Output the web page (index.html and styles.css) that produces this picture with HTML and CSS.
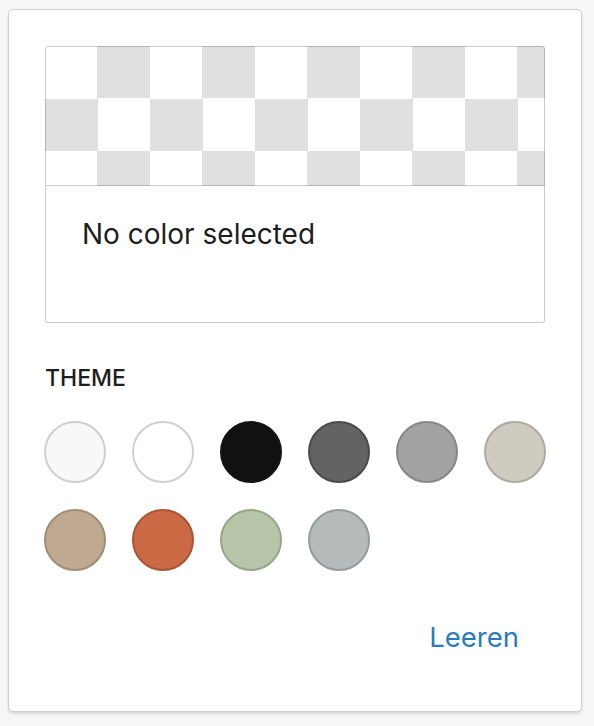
FILE: index.html
```html
<!DOCTYPE html>
<html lang="de">
<head>
<meta charset="utf-8">
<title>Color picker</title>
<link rel="stylesheet" href="styles.css">
</head>
<body>
<div class="card">
  <div class="preview">
    <div class="checker"></div>
    <div class="preview-label">No color selected</div>
  </div>
  <div class="section-title">THEME</div>
  <div class="swatches">
    <button class="swatch s1" aria-label="Off white"></button>
    <button class="swatch s2" aria-label="White"></button>
    <button class="swatch s3" aria-label="Black"></button>
    <button class="swatch s4" aria-label="Dark gray"></button>
    <button class="swatch s5" aria-label="Gray"></button>
    <button class="swatch s6" aria-label="Stone"></button>
    <button class="swatch s7" aria-label="Sand"></button>
    <button class="swatch s8" aria-label="Terracotta"></button>
    <button class="swatch s9" aria-label="Sage"></button>
    <button class="swatch s10" aria-label="Slate"></button>
  </div>
  <div class="actions">
    <button class="link-btn">Leeren</button>
  </div>
</div>
</body>
</html>
```
FILE: styles.css
```css
* { box-sizing: border-box; }
html, body { margin: 0; padding: 0; }
body {
  background: #f7f7f7;
  font-family: Inter, "Noto Sans", sans-serif;
  color: #1e1e1e;
  padding: 9px 12px 14px 8px;
}
.card {
  width: 574px;
  height: 703px;
  background: #fff;
  border: 1px solid #cfcfcf;
  border-radius: 5px;
  box-shadow: 0 2px 3px rgba(0,0,0,0.12);
  padding: 36px 36px 0 36px;
  display: flex;
  flex-direction: column;
}
.preview {
  width: 500px;
  display: flex;
  flex-direction: column;
}
.checker {
  height: 140px;
  border-radius: 3px 3px 0 0;
  background-color: #fff;
  background-image: conic-gradient(#e0e0e0 0 25%, #fff 0 50%, #e0e0e0 0 75%, #fff 0);
  background-size: 105px 105px;
  background-position: 0 0;
  box-shadow: inset 0 0 0 1px rgba(0,0,0,0.2);
}
.preview-label {
  height: 137px;
  border: 1px solid rgba(0,0,0,0.2);
  border-top: 0;
  border-radius: 0 0 3px 3px;
  padding: 28px 0 0 36px;
  font-size: 28px;
  line-height: 40px;
}
.section-title {
  margin-top: 40px;
  font-size: 23px;
  font-weight: 500;
  line-height: 30px;
}
.swatches {
  margin-top: 28px;
  display: grid;
  grid-template-columns: repeat(6, 62px);
  column-gap: 26px;
  row-gap: 26px;
  margin-left: -1px;
}
.swatch {
  width: 62px;
  height: 62px;
  border-radius: 50%;
  border: 2px solid;
  padding: 0;
  cursor: pointer;
}
.s1 { background: #f8f8f8; border-color: #cfcfcf; }
.s2 { background: #ffffff; border-color: #d0d0d0; }
.s3 { background: #111111; border-color: #141414; }
.s4 { background: #636363; border-color: #4a4a4a; }
.s5 { background: #a2a2a2; border-color: #878787; }
.s6 { background: #cfcbc1; border-color: #aeaaa2; }
.s7 { background: #bfaa91; border-color: #9f8d76; }
.s8 { background: #ca6943; border-color: #a95533; }
.s9 { background: #b6c4a8; border-color: #97a68b; }
.s10 { background: #b5bbbb; border-color: #959b9b; }
.actions {
  display: flex;
  justify-content: flex-end;
  margin-top: 46px;
  padding-right: 26px;
}
.link-btn {
  background: none;
  border: 0;
  padding: 0;
  font-family: inherit;
  font-size: 27.5px;
  line-height: 40px;
  color: #2a7bbd;
  cursor: pointer;
}
```
